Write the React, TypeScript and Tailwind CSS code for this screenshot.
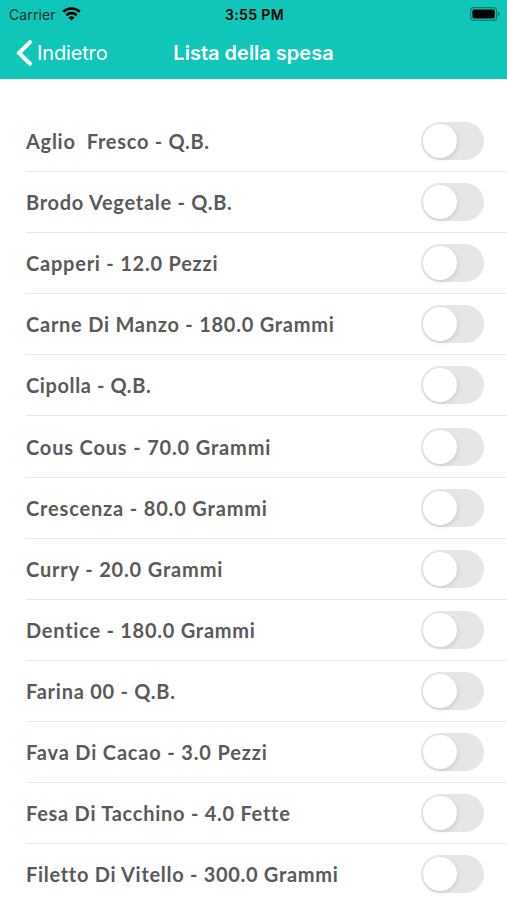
import { useState } from "react";

type Item = { id: number; label: string; tracking: string };

const ITEMS: Item[] = [
  { id: 1, label: "Aglio  Fresco - Q.B.", tracking: "tracking-[0.72px]" },
  { id: 2, label: "Brodo Vegetale - Q.B.", tracking: "tracking-[0.72px]" },
  { id: 3, label: "Capperi - 12.0 Pezzi", tracking: "tracking-[0.77px]" },
  { id: 4, label: "Carne Di Manzo - 180.0 Grammi", tracking: "tracking-[0.75px]" },
  { id: 5, label: "Cipolla - Q.B.", tracking: "tracking-[0.6px]" },
  { id: 6, label: "Cous Cous - 70.0 Grammi", tracking: "tracking-[0.83px]" },
  { id: 7, label: "Crescenza - 80.0 Grammi", tracking: "tracking-[0.83px]" },
  { id: 8, label: "Curry - 20.0 Grammi", tracking: "tracking-[0.83px]" },
  { id: 9, label: "Dentice - 180.0 Grammi", tracking: "tracking-[0.75px]" },
  { id: 10, label: "Farina 00 - Q.B.", tracking: "tracking-[0.75px]" },
  { id: 11, label: "Fava Di Cacao - 3.0 Pezzi", tracking: "tracking-[0.83px]" },
  { id: 12, label: "Fesa Di Tacchino - 4.0 Fette", tracking: "tracking-[0.74px]" },
  { id: 13, label: "Filetto Di Vitello - 300.0 Grammi", tracking: "tracking-[0.7px]" },
];

export default function App() {
  const [checked, setChecked] = useState<number[]>([]);

  const toggle = (id: number) =>
    setChecked((prev) => (prev.includes(id) ? prev.filter((c) => c !== id) : [...prev, id]));

  return (
    <main className="flex h-[900px] w-full flex-col overflow-hidden bg-white font-['Inter',sans-serif]">
      <header className="h-[79px] shrink-0 bg-[#0fc6b8]">
        <StatusBar />
        <NavBar />
      </header>

      <ul className="flex flex-col pt-8">
        {ITEMS.map((item) => (
          <li key={item.id} className="flex h-[61.1px] shrink-0 pl-[26px]">
            <div className="flex flex-1 items-center justify-between border-b border-[#e9e9ea] pr-[23px]">
              <span
                className={`whitespace-pre font-['Lato',sans-serif] text-[20px] font-bold text-[#5a5a5a] ${item.tracking}`}
              >
                {item.label}
              </span>
              <Toggle
                label={item.label}
                on={checked.includes(item.id)}
                onChange={() => toggle(item.id)}
              />
            </div>
          </li>
        ))}
      </ul>
    </main>
  );
}

function StatusBar() {
  return (
    <div className="grid h-[27px] grid-cols-[1fr_auto_1fr] items-center pl-[9px] pr-[7px] text-black">
      <div className="flex items-center gap-[6px]">
        <span className="pt-px text-[14px] tracking-[0.1px] text-[#05302d]">Carrier</span>
        <WifiIcon />
      </div>
      <span className="pt-px text-[14px] font-semibold tracking-[0.35px]">3:55 PM</span>
      <BatteryIcon />
    </div>
  );
}

function NavBar() {
  return (
    <div className="grid h-[52px] grid-cols-[1fr_auto_1fr] items-center text-[20px] text-white">
      <button className="flex items-center gap-[4px] pl-[16px]">
        <svg width="17" height="26" viewBox="0 0 17 26" fill="none" stroke="white" strokeWidth="4">
          <path d="M14 2.200 3 13l11 10.800" strokeLinecap="round" strokeLinejoin="miter" />
        </svg>
        <span className="tracking-[-0.15px]">Indietro</span>
      </button>
      <h1 className="font-semibold">Lista della spesa</h1>
    </div>
  );
}

function WifiIcon() {
  return (
    <svg width="19" height="14" viewBox="0 0 19 14" fill="none" stroke="black" strokeWidth="2.6">
      <path d="M1.200 4.800a12 12 0 0 1 16.600 0" />
      <path d="M4.300 8.200a7.500 7.500 0 0 1 10.400 0" />
      <path d="M9.500 13.600 6.400 10.600a4.500 4.500 0 0 1 6.200 0z" fill="black" stroke="none" />
    </svg>
  );
}

function BatteryIcon() {
  return (
    <svg className="justify-self-end" width="30" height="14" viewBox="0 0 30 14">
      <rect x="0.6" y="0.6" width="26" height="12.8" rx="3.4" fill="none" stroke="#087d74" strokeWidth="1.2" />
      <rect x="2.4" y="2.4" width="22.4" height="9.2" rx="1.8" fill="black" />
      <path d="M28 4.800c2 .7 2 3.700 0 4.400z" fill="#087d74" />
    </svg>
  );
}

function Toggle({ label, on, onChange }: { label: string; on: boolean; onChange: () => void }) {
  return (
    <button
      role="switch"
      aria-checked={on}
      aria-label={label}
      onClick={onChange}
      className={`flex h-[38px] w-[63px] items-center rounded-full p-[2px] ${
        on ? "justify-end bg-[#0fc6b8]" : "bg-[#e6e6e8]"
      }`}
    >
      <span className="size-[34px] rounded-full bg-white shadow-[1px_2px_4px_rgba(0,0,0,0.1)]" />
    </button>
  );
}
